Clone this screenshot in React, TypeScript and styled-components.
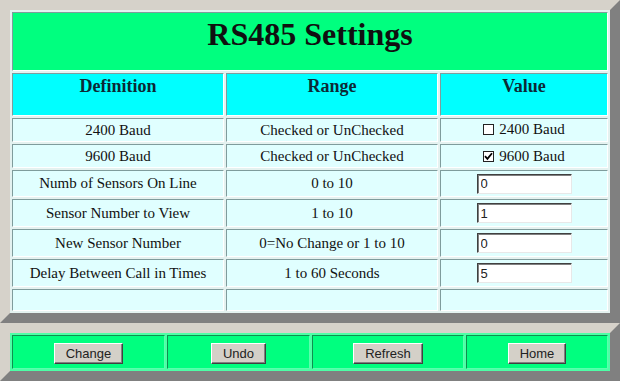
import React from "react";
import styled, { createGlobalStyle } from "styled-components";

const Global = createGlobalStyle`
  html, body { margin: 0; padding: 0; background: #d4d0c8; }
  body { font-family: "Liberation Serif", "Times New Roman", serif; }
  * { box-sizing: border-box; }
`;

const Frame = styled.table<{ $bg: string }>`
  width: 620px;
  border-style: solid;
  border-width: 10px;
  border-color: #d6d2ca #808080 #808080 #d6d2ca;
  border-collapse: separate;
  border-spacing: 2px;
  table-layout: fixed;
  background: ${(p) => p.$bg};
`;

const Cell = styled.td<{ $h: number; $bg: string; $top?: boolean }>`
  height: ${(p) => p.$h}px;
  background: ${(p) => p.$bg};
  border: 1px solid;
  border-color: #7f9c9c #ffffff #ffffff #7f9c9c;
  padding: ${(p) => (p.$top ? "2px 0 0" : "0")};
  vertical-align: ${(p) => (p.$top ? "top" : "middle")};
  text-align: center;
  font-size: 15px;
  color: #111;
`;

const Title = styled.div`
  font-size: 32px;
  font-weight: bold;
  color: #101010;
  margin-top: 1px;
`;

const Head = styled.div`
  font-size: 18px;
  font-weight: bold;
  color: #0c2a36;
`;

const CheckLabel = styled.span`
  display: inline-flex;
  align-items: center;
  gap: 5px;
`;

const Box = styled.span`
  display: inline-flex;
  align-items: center;
  justify-content: center;
  width: 11px;
  height: 11px;
  border: 1px solid #222;
  background: #fff;
`;

const TextBox = styled.input`
  width: 95px;
  height: 20px;
  border: 1px solid;
  border-color: #404040 #e8e8e8 #e8e8e8 #404040;
  box-shadow: inset 1px 1px 0 #808080;
  background: #fff;
  padding: 0 3px;
  font-family: "Liberation Sans", Arial, sans-serif;
  font-size: 13px;
  color: #222;
  outline: none;
`;

const BarCell = styled.td`
  height: 34px;
  background: #00ff7f;
  border: 1px solid;
  border-color: #0f8f4f #5affad #5affad #0f8f4f;
  padding: 0;
  text-align: center;
  vertical-align: middle;
`;

const Button = styled.button`
  height: 21px;
  padding: 0 11px;
  margin-top: 3px;
  background: #d4d0c8;
  border: 1px solid;
  border-color: #ffffff #404040 #404040 #ffffff;
  box-shadow: inset -1px -1px 0 #808080;
  font-family: "Liberation Sans", Arial, sans-serif;
  font-size: 13px;
  color: #222;
`;

const Check = ({ checked, label }: { checked: boolean; label: string }) => (
  <CheckLabel>
    <Box>
      {checked && (
        <svg width="9" height="9" viewBox="0 0 9 9">
          <path d="M1 4.2 L3.4 6.8 L8 1.2" stroke="#000" strokeWidth="1.8" fill="none" />
        </svg>
      )}
    </Box>
    {label}
  </CheckLabel>
);

type Row = { def: string; range: string; value: React.ReactNode; h: number };

const LC = "#e0ffff";

const rows: Row[] = [
  { def: "2400 Baud", range: "Checked or UnChecked", value: <Check checked={false} label="2400 Baud" />, h: 24 },
  { def: "9600 Baud", range: "Checked or UnChecked", value: <Check checked label="9600 Baud" />, h: 24 },
  { def: "Numb of Sensors On Line", range: "0 to 10", value: <TextBox defaultValue="0" />, h: 27 },
  { def: "Sensor Number to View", range: "1 to 10", value: <TextBox defaultValue="1" />, h: 28 },
  { def: "New Sensor Number", range: "0=No Change or 1 to 10", value: <TextBox defaultValue="0" />, h: 28 },
  { def: "Delay Between Call in Times", range: "1 to 60 Seconds", value: <TextBox defaultValue="5" />, h: 28 },
  { def: "", range: "", value: null, h: 22 },
];

export default function App() {
  return (
    <>
      <Global />
      <Frame $bg="#e4f2f0">
        <colgroup>
          <col style={{ width: 212 }} />
          <col style={{ width: 212 }} />
          <col style={{ width: 168 }} />
        </colgroup>
        <tbody>
          <tr>
            <Cell colSpan={3} $h={59} $bg="#00ff7f" $top>
              <Title>RS485 Settings</Title>
            </Cell>
          </tr>
          <tr>
            <Cell $h={43} $bg="#00ffff" $top><Head>Definition</Head></Cell>
            <Cell $h={43} $bg="#00ffff" $top><Head>Range</Head></Cell>
            <Cell $h={43} $bg="#00ffff" $top><Head>Value</Head></Cell>
          </tr>
          {rows.map((r, i) => (
            <tr key={i}>
              <Cell $h={r.h} $bg={LC}>{r.def}</Cell>
              <Cell $h={r.h} $bg={LC}>{r.range}</Cell>
              <Cell $h={r.h} $bg={LC}>{r.value}</Cell>
            </tr>
          ))}
        </tbody>
      </Frame>
      <Frame $bg="#4dffa6">
        <colgroup>
          <col style={{ width: 153 }} />
          <col style={{ width: 143 }} />
          <col style={{ width: 152 }} />
          <col style={{ width: 142 }} />
        </colgroup>
        <tbody>
          <tr>
            <BarCell><Button>Change</Button></BarCell>
            <BarCell><Button>Undo</Button></BarCell>
            <BarCell><Button>Refresh</Button></BarCell>
            <BarCell><Button>Home</Button></BarCell>
          </tr>
        </tbody>
      </Frame>
    </>
  );
}
